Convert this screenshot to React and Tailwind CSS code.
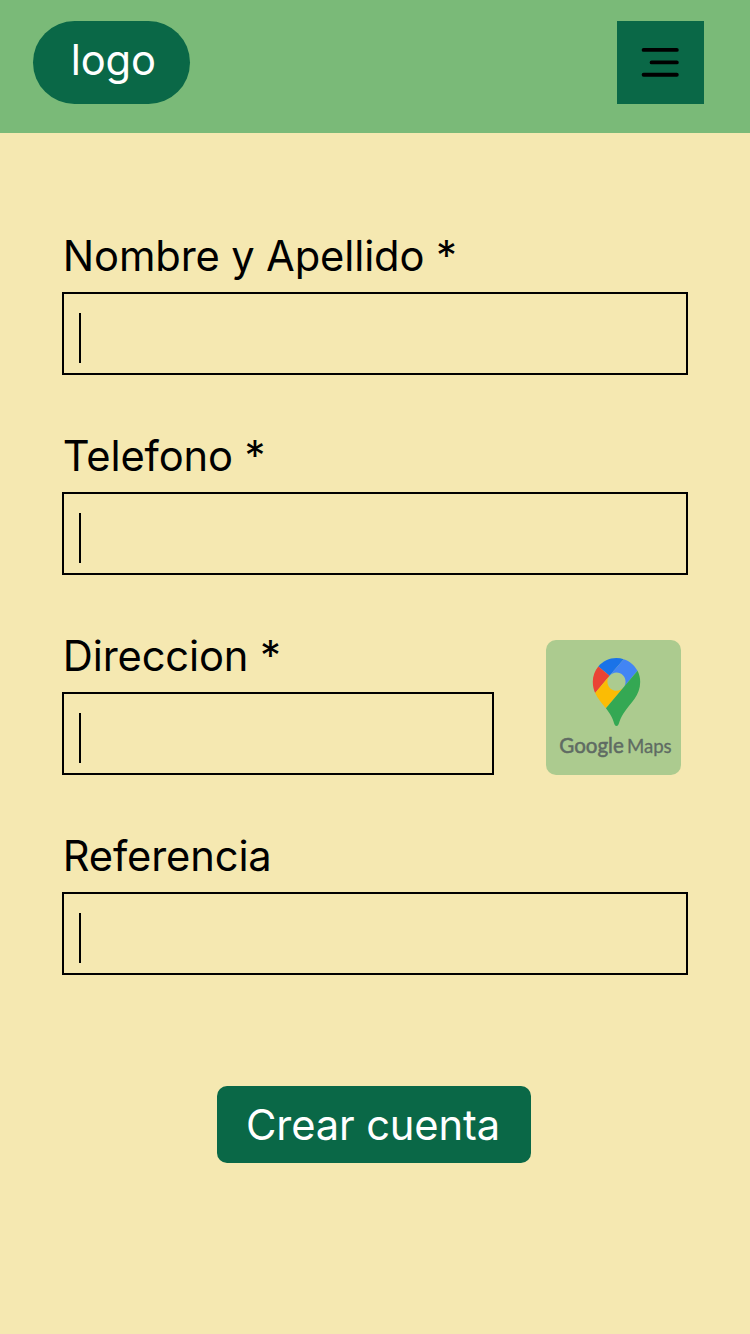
function MenuIcon() {
  return (
    <svg width="38" height="30" viewBox="0 0 38 30" stroke="#000" strokeWidth="3.9" strokeLinecap="round">
      <path d="M2.6 2.9H35.8M10.6 15.4H35.8M2.6 27.8H35.8" />
    </svg>
  );
}

function MapsLogo() {
  return (
    <svg className="size-full" viewBox="0 0 135.4 135.4">
      <g transform="translate(46.8 18) scale(.513)">
        <path fill="#1a73e8" d="M60.2 2.2C55.8.8 51 0 46.1 0 32 0 19.3 6.4 10.8 16.5l21.8 18.3L60.2 2.2z" />
        <path fill="#ea4335" d="M10.8 16.5C4.1 24.5 0 34.9 0 46.1c0 8.7 1.7 15.7 4.6 22l28-33.3-21.8-18.3z" />
        <path fill="#4285f4" d="M46.2 28.5c9.8 0 17.7 7.9 17.7 17.7 0 4.3-1.6 8.3-4.2 11.4 0 0 13.9-16.6 27.5-32.7-5.6-10.8-15.3-19-27-22.7L32.6 34.8c3.3-3.8 8.1-6.3 13.6-6.3" />
        <path fill="#fbbc04" d="M46.2 63.8c-9.8 0-17.7-7.9-17.7-17.7 0-4.3 1.5-8.3 4.1-11.3l-28 33.3c4.8 10.6 12.8 19.2 21 29.9l34.1-40.5c-3.3 3.9-8.1 6.3-13.5 6.3" />
        <path fill="#34a853" d="M59.1 109.2c15.4-24.1 33.3-35 33.3-63 0-7.7-1.9-14.9-5.2-21.3L25.6 98c2.6 3.4 5.3 7.3 7.9 11.3 9.4 14.5 6.8 23.1 12.8 23.1s3.4-8.7 12.8-23.2" />
      </g>
      <g fill="#5f6b63" stroke="#5f6b63" fontFamily="Lato, sans-serif">
        <text x="13.3" y="112.6" fontSize="22" strokeWidth=".55" textLength="64.5" lengthAdjust="spacingAndGlyphs">Google</text>
        <text x="80.9" y="112.6" fontSize="19" strokeWidth=".3" textLength="44.8" lengthAdjust="spacingAndGlyphs">Maps</text>
      </g>
    </svg>
  );
}

function Field({ label }) {
  return (
    <label className="block h-[200px]">
      <span className="block h-[59px] pt-[0.4px] pl-[0.8px] text-[41.67px] leading-[46px] tracking-[-0.13px] whitespace-nowrap">{label}</span>
      <span className="flex h-[83.5px] items-start border-2 border-black pt-[19px] pl-[15px]">
        <span className="h-[50px] w-[2px] bg-black" />
      </span>
    </label>
  );
}

export default function App() {
  return (
    <div className="h-[1334px] w-[750px] bg-[#f5e8b1] font-['Inter',sans-serif] text-black">
      <header className="flex h-[133.3px] items-start justify-between bg-[#7aba78] pt-[20.8px] pr-[45.8px] pl-[33.3px]">
        <div className="h-[83.3px] w-[156.3px] rounded-full bg-[#0a6847] pt-[14.5px] pl-[37.5px] text-[41.67px] leading-[50px] tracking-[-0.12px] text-white">
          logo
        </div>
        <button className="flex h-[83.3px] w-[87.5px] items-center justify-center bg-[#0a6847]">
          <MenuIcon />
        </button>
      </header>
      <main className="px-[62px] pt-[99.7px]">
        <Field label="Nombre y Apellido *" />
        <Field label="Telefono *" />
        <div className="flex">
          <div className="w-[432px]">
            <Field label="Direccion *" />
          </div>
          <button className="mt-[6.8px] ml-[51.7px] size-[135.4px] rounded-[10px] bg-[#accb8f]">
            <MapsLogo />
          </button>
        </div>
        <Field label="Referencia" />
        <button className="mt-[53px] ml-[154.7px] flex h-[77.1px] w-[314.6px] items-center justify-center rounded-[10px] bg-[#0a6847] pt-[1.5px] pr-[2px] text-[41.67px] leading-[50px] tracking-[-0.12px] whitespace-nowrap text-white">
          Crear cuenta
        </button>
      </main>
    </div>
  );
}
